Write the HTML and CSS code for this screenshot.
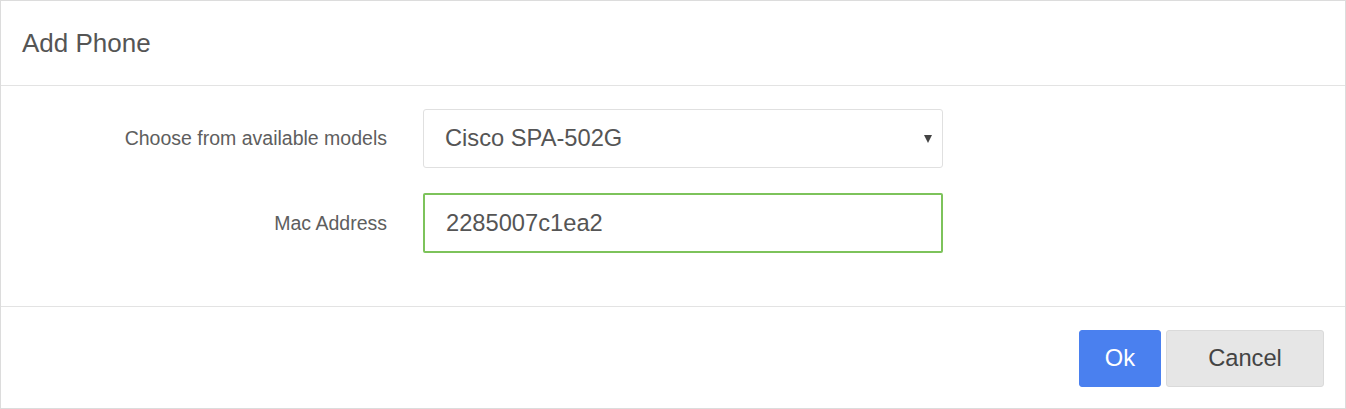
FILE: index.html
```html
<!DOCTYPE html>
<html>
<head>
<meta charset="utf-8">
<link rel="stylesheet" href="styles.css">
</head>
<body>
<div class="modal">
  <div class="modal-header">
    <h4 class="modal-title">Add Phone</h4>
  </div>
  <div class="modal-body">
    <div class="form-row">
      <label class="form-label">Choose from available models</label>
      <div class="select-box">
        <span class="select-value">Cisco SPA-502G</span>
        <span class="select-arrow"></span>
      </div>
    </div>
    <div class="form-row">
      <label class="form-label">Mac Address</label>
      <div class="text-input">2285007c1ea2</div>
    </div>
  </div>
  <div class="modal-footer">
    <button class="btn btn-primary">Ok</button>
    <button class="btn btn-default">Cancel</button>
  </div>
</div>
</body>
</html>
```
FILE: styles.css
```css
* { box-sizing: border-box; }
html, body { margin: 0; padding: 0; background: #fff; }
body {
  font-family: "Liberation Sans", Arial, sans-serif;
  color: #555;
  width: 1346px;
  height: 409px;
}
.modal {
  width: 1346px;
  height: 409px;
  border: 1px solid #dcdcdc;
  display: flex;
  flex-direction: column;
}
.modal-header {
  height: 85px;
  flex: none;
  border-bottom: 1px solid #e3e3e3;
  display: flex;
  align-items: center;
  padding: 0 21px 0;
}
.modal-title {
  margin: 0;
  font-size: 26px;
  font-weight: normal;
  color: #555;
}
.modal-body {
  height: 221px;
  flex: none;
  border-bottom: 1px solid #e3e3e3;
  padding-top: 23px;
  display: flex;
  flex-direction: column;
  gap: 25px;
}
.form-row {
  display: grid;
  grid-template-columns: 386px 520px;
  column-gap: 36px;
  align-items: center;
}
.form-label {
  text-align: right;
  font-size: 19.5px;
  color: #5e5e5e;
}
.select-box {
  height: 59px;
  border: 1px solid #e0e0e0;
  border-radius: 3px;
  display: flex;
  align-items: center;
  justify-content: space-between;
  padding: 0 10px 0 21px;
  font-size: 23.7px;
  color: #555;
}
.select-arrow {
  width: 0;
  height: 0;
  border-left: 4px solid transparent;
  border-right: 4px solid transparent;
  border-top: 8px solid #444;
  margin-top: 1px;
}
.text-input {
  height: 60px;
  border: 2px solid #7dc35b;
  border-radius: 2px;
  display: flex;
  align-items: center;
  padding: 0 21px;
  font-size: 23.7px;
  color: #555;
}
.modal-footer {
  flex: 1;
  display: flex;
  justify-content: flex-end;
  align-items: flex-start;
  padding: 23px 21px 0 0;
  gap: 5px;
}
.btn {
  height: 57px;
  font-family: "Liberation Sans", Arial, sans-serif;
  font-size: 23.7px;
  border-radius: 3px;
  cursor: pointer;
  padding: 0;
}
.btn-primary {
  width: 82px;
  background: #4a80ef;
  color: #fff;
  border: 1px solid #4a80ef;
}
.btn-default {
  width: 158px;
  background: #e6e6e6;
  color: #444;
  border: 1px solid #dadada;
}
```
